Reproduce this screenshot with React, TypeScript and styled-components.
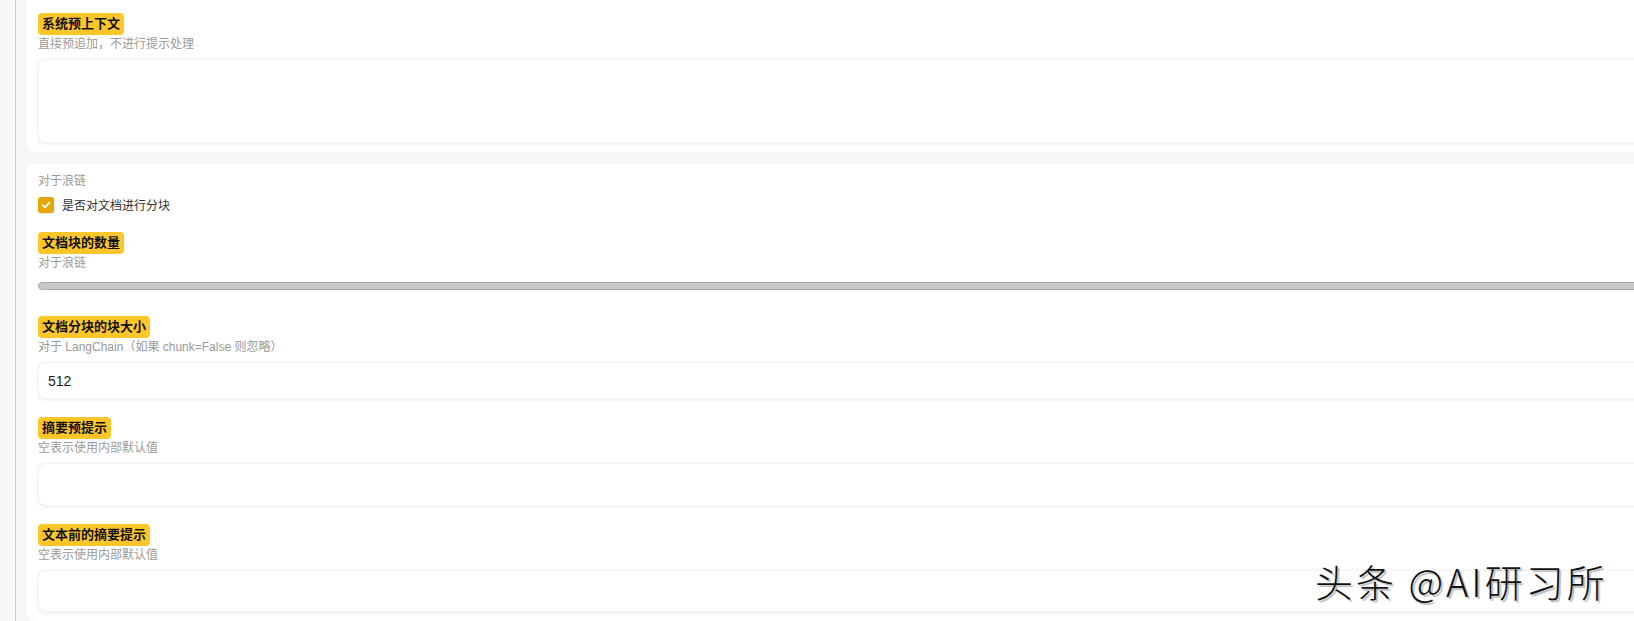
import React from "react";
import styled, { createGlobalStyle } from "styled-components";

const GlobalStyle = createGlobalStyle`
  html, body {
    margin: 0;
    padding: 0;
    background: #f7f7f7;
    overflow: hidden;
  }
  body {
    font-family: "Liberation Sans", "Noto Sans CJK SC", sans-serif;
  }
`;

interface FieldProps {
  label: string;
  info: string;
  children?: React.ReactNode;
}

const Field = ({ label, info, children }: FieldProps) => (
  <FieldWrap>
    <Label>{label}</Label>
    <Info>{info}</Info>
    {children}
  </FieldWrap>
);

const CheckIcon = () => (
  <svg width="10" height="10" viewBox="0 0 10 10">
    <path d="M1.8 5.2 L4 7.3 L8.2 2.8" fill="none" stroke="#fff" strokeWidth="1.8" strokeLinecap="round" strokeLinejoin="round" />
  </svg>
);

export default function App() {
  return (
    <Page>
      <GlobalStyle />
      <Rail />
      <Column>
        <Card $top>
          <Field label="系统预上下文" info="直接预追加，不进行提示处理">
            <TextBox $height={84} />
          </Field>
        </Card>
        <Card>
          <Info>对于浪链</Info>
          <CheckRow>
            <CheckBox>
              <CheckIcon />
            </CheckBox>
            <CheckLabel>是否对文档进行分块</CheckLabel>
          </CheckRow>
          <Field label="文档块的数量" info="对于浪链">
            <SliderTrack />
          </Field>
          <Field label="文档分块的块大小" info="对于 LangChain（如果 chunk=False 则忽略）">
            <InputBox>512</InputBox>
          </Field>
          <Field label="摘要预提示" info="空表示使用内部默认值">
            <TextBox $height={43} />
          </Field>
          <Field label="文本前的摘要提示" info="空表示使用内部默认值">
            <TextBox $height={42} />
          </Field>
        </Card>
      </Column>
      <Watermark>头条 @AI研习所</Watermark>
    </Page>
  );
}

const Page = styled.div`
  position: relative;
  display: flex;
  width: 100%;
  height: 621px;
  overflow: hidden;
  background: #f7f7f7;
`;

const Rail = styled.div`
  flex: none;
  width: 1px;
  margin-left: 15px;
  margin-right: 11px;
  background: #cfcfcf;
`;

const Column = styled.div`
  flex: 1;
  display: flex;
  flex-direction: column;
  gap: 12px;
  margin-right: -40px;
`;

const Card = styled.section<{ $top?: boolean }>`
  background: #fff;
  border-radius: 0 0 9px 9px;
  padding: ${(p) => (p.$top ? "13px 0 9px 11px" : "8px 0 9px 11px")};
  display: flex;
  flex-direction: column;
`;

const FieldWrap = styled.div`
  display: flex;
  flex-direction: column;
  align-items: flex-start;
  margin-bottom: 18px;
  &:last-child {
    margin-bottom: 0;
  }
`;

const Label = styled.span`
  display: inline-block;
  height: 22px;
  line-height: 22px;
  padding: 0 4px;
  border-radius: 4px;
  background: #ffc629;
  color: #111;
  font-size: 13px;
  font-weight: 700;
`;

const Info = styled.div`
  font-size: 12px;
  line-height: 18px;
  color: #9a9a9a;
`;

const TextBox = styled.div<{ $height: number }>`
  align-self: stretch;
  margin-top: 6px;
  height: ${(p) => p.$height}px;
  box-sizing: border-box;
  background: #fff;
  border: 1px solid #f3f3f3;
  border-radius: 8px;
  box-shadow: 0 1px 4px rgba(0, 0, 0, 0.08);
`;

const InputBox = styled.div`
  align-self: stretch;
  margin-top: 6px;
  height: 37px;
  box-sizing: border-box;
  padding: 0 9px;
  display: flex;
  align-items: center;
  background: #fff;
  border: 1px solid #f3f3f3;
  border-radius: 8px;
  box-shadow: 0 1px 4px rgba(0, 0, 0, 0.08);
  font-size: 14px;
  color: #222;
`;

const CheckRow = styled.div`
  display: flex;
  align-items: center;
  gap: 8px;
  margin-top: 6px;
  margin-bottom: 19px;
`;

const CheckBox = styled.span`
  width: 16px;
  height: 16px;
  border-radius: 3px;
  background: #e6a800;
  display: flex;
  align-items: center;
  justify-content: center;
  box-shadow: 0 1px 2px rgba(0, 0, 0, 0.12);
`;

const CheckLabel = styled.span`
  font-size: 12px;
  color: #333;
`;

const SliderTrack = styled.div`
  align-self: stretch;
  margin-top: 10px;
  margin-bottom: 8px;
  height: 8px;
  box-sizing: border-box;
  background: #c8c8c8;
  border: 1px solid #aaaaaa;
  border-radius: 4px;
`;

const Watermark = styled.div`
  position: absolute;
  left: 1315px;
  top: 553px;
  font-family: "Noto Sans CJK SC", sans-serif;
  font-size: 38px;
  font-weight: 300;
  letter-spacing: 3px;
  color: #111;
  white-space: nowrap;
  text-shadow: 2px 2px 1px rgba(180, 180, 180, 0.9), -1px -1px 0 #fff;
`;
